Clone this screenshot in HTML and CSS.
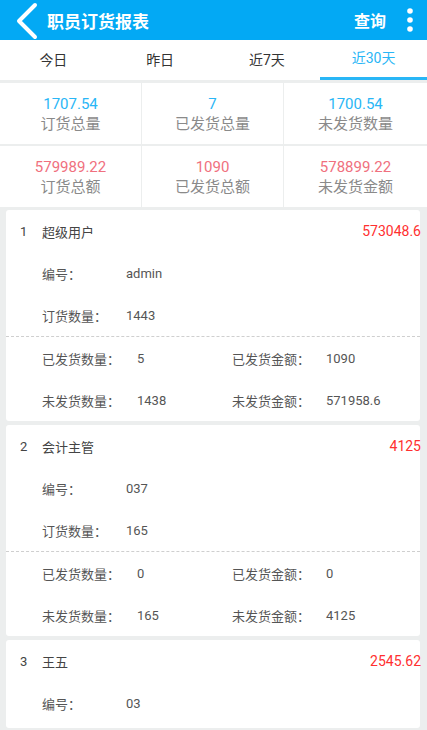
FILE: index.html
```html
<html>
<head>
  <meta charset="utf-8" />
  <link rel="stylesheet" href="styles.css">
</head>
<body>
  <div id="header">
    <svg class="back" width="24" height="40" viewBox="0 0 24 40">
      <path d="M20 5 L4 21 L20 37" fill="none" stroke="#fff" stroke-width="4" stroke-linecap="round" stroke-linejoin="round"/>
    </svg>
    <span class="title">职员订货报表</span>
    <span class="query">查询</span>
    <svg class="more" width="8" height="30" viewBox="0 0 8 30">
      <circle cx="4" cy="6" r="2.8" fill="#fff"/>
      <circle cx="4" cy="15" r="2.8" fill="#fff"/>
      <circle cx="4" cy="24" r="2.8" fill="#fff"/>
    </svg>
  </div>

  <div id="tabs">
    <div class="tab">今日</div>
    <div class="tab">昨日</div>
    <div class="tab">近7天</div>
    <div class="tab active">近30天</div>
  </div>

  <div id="stats">
    <div class="stat"><div class="num blue">1707.54</div><div class="lbl">订货总量</div></div>
    <div class="stat"><div class="num blue">7</div><div class="lbl">已发货总量</div></div>
    <div class="stat"><div class="num blue">1700.54</div><div class="lbl">未发货数量</div></div>
    <div class="stat"><div class="num red">579989.22</div><div class="lbl">订货总额</div></div>
    <div class="stat"><div class="num red">1090</div><div class="lbl">已发货总额</div></div>
    <div class="stat"><div class="num red">578899.22</div><div class="lbl">未发货金额</div></div>
  </div>

  <div id="list">
    <div class="card">
      <div class="row head"><span class="idx">1</span><span class="name">超级用户</span><span class="amount">573048.6</span></div>
      <div class="row"><span class="key">编号：</span><span>admin</span></div>
      <div class="row"><span class="key">订货数量：</span><span>1443</span></div>
      <div class="split">
        <div class="row"><span class="key2">已发货数量：</span><span class="val2">5</span><span class="key3">已发货金额：</span><span>1090</span></div>
        <div class="row"><span class="key2">未发货数量：</span><span class="val2">1438</span><span class="key3">未发货金额：</span><span>571958.6</span></div>
      </div>
    </div>

    <div class="card">
      <div class="row head"><span class="idx">2</span><span class="name">会计主管</span><span class="amount">4125</span></div>
      <div class="row"><span class="key">编号：</span><span>037</span></div>
      <div class="row"><span class="key">订货数量：</span><span>165</span></div>
      <div class="split">
        <div class="row"><span class="key2">已发货数量：</span><span class="val2">0</span><span class="key3">已发货金额：</span><span>0</span></div>
        <div class="row"><span class="key2">未发货数量：</span><span class="val2">165</span><span class="key3">未发货金额：</span><span>4125</span></div>
      </div>
    </div>

    <div class="card last">
      <div class="row head"><span class="idx">3</span><span class="name">王五</span><span class="amount">2545.62</span></div>
      <div class="row"><span class="key">编号：</span><span>03</span></div>
    </div>
  </div>
</body>
</html>
```

FILE: styles.css
```css
body {
  margin: 0;
  background-color: #eceeee;
  font-family: Roboto, "Noto Sans CJK SC", sans-serif;
  overflow: hidden;
}

#header {
  height: 40px;
  background-color: #03a9f4;
  color: #fff;
  display: flex;
  align-items: center;
}
#header .back {
  margin-left: 15px;
}
#header .title {
  margin-left: 8px;
  font-size: 17px;
  font-weight: bold;
  flex: 1;
}
#header .query {
  font-size: 16px;
  font-weight: bold;
  margin-right: 20px;
}
#header .more {
  margin-right: 13px;
}

#tabs {
  height: 40px;
  background-color: #fff;
  display: flex;
  margin-bottom: 3px;
}
.tab {
  flex: 1;
  text-align: center;
  line-height: 40px;
  font-size: 14px;
  color: #333;
  box-sizing: border-box;
}
.tab.active {
  color: #29b6f6;
  border-bottom: 3px solid #29b6f6;
  line-height: 37px;
}

#stats {
  display: grid;
  grid-template-columns: 141px 141px 1fr;
  column-gap: 1px;
  row-gap: 2px;
  margin-bottom: 3px;
}
.stat {
  background-color: #fff;
  height: 61px;
  text-align: center;
  display: flex;
  flex-direction: column;
  justify-content: center;
}
.num {
  font-size: 15px;
  line-height: 20px;
}
.num.blue { color: #29b6f6; }
.num.red { color: #f0707e; }
.lbl {
  font-size: 15px;
  line-height: 20px;
  color: #8a8a8a;
}

#list {
  padding: 0 7px 0 6px;
  display: flex;
  flex-direction: column;
  gap: 4px;
}
.card {
  background-color: #fff;
  border-radius: 3px;
}
.card.last {
  padding-bottom: 4px;
}
.row {
  height: 42px;
  display: flex;
  align-items: center;
  font-size: 13px;
  color: #555;
  padding-left: 36px;
}
.row.head {
  padding-left: 14px;
  color: #444;
}
.idx {
  width: 22px;
}
.name {
  flex: 1;
}
.amount {
  color: #ff3030;
  font-size: 14px;
  margin-right: -1px;
}
.key {
  width: 84px;
}
.split {
  border-top: 1px dashed #cfcfcf;
}
.key2 {
  width: 95px;
}
.val2 {
  width: 95px;
}
.key3 {
  width: 94px;
}
```
